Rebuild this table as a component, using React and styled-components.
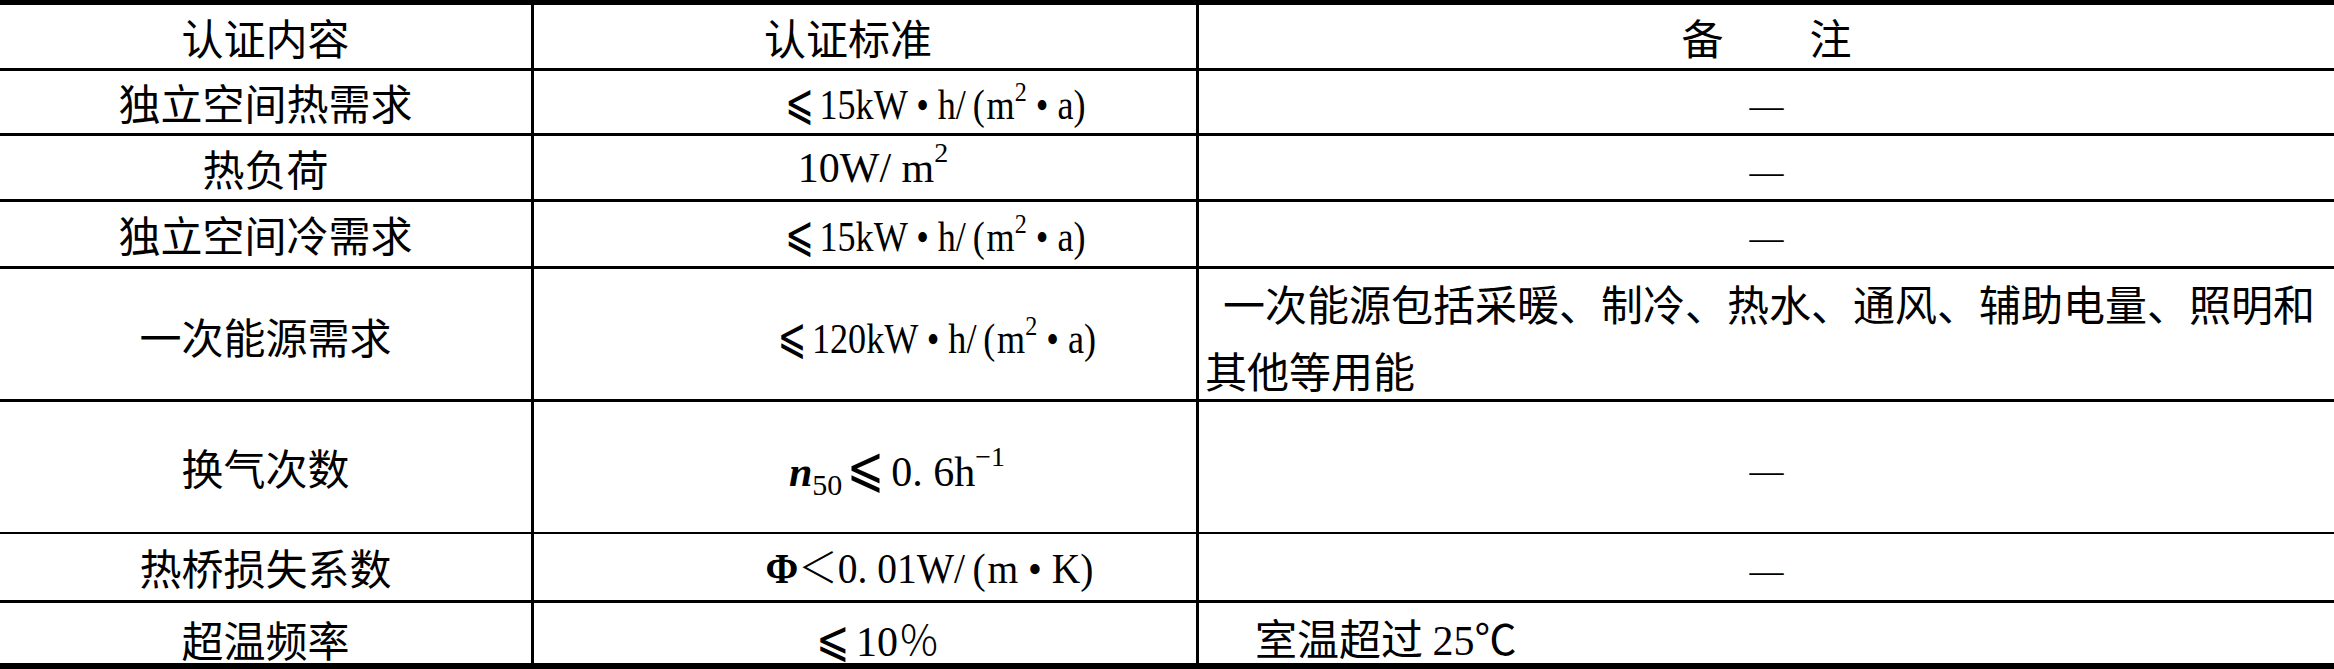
import React from 'react';
import styled, { createGlobalStyle } from 'styled-components';

const GlobalStyle = createGlobalStyle`
  html, body {
    margin: 0;
    padding: 0;
    background: #fff;
  }
  body {
    color: #000;
    font-family: "Noto Sans CJK SC", sans-serif;
  }
`;

const Table = styled.div`
  width: 2334px;
  border-top: 5px solid #000;
  border-bottom: 6px solid #000;
  font-family: "Noto Sans CJK SC", sans-serif;
  font-size: 42px;
`;

const Row = styled.div`
  display: grid;
  grid-template-columns: 531px 665px 1fr;
  height: ${(p) => p.$h}px;
  border-top: ${(p) => p.$line || 0}px solid #000;
`;

const Cell = styled.div`
  display: flex;
  align-items: center;
  justify-content: center;
  min-width: 0;
  line-height: 1;
  white-space: nowrap;

  & + & {
    border-left: 3px solid #000;
  }
`;

const MidCell = styled(Cell)`
  padding-left: ${(p) => Math.max(0, (p.$shift || 0) * 2)}px;
  padding-right: ${(p) => Math.max(0, -(p.$shift || 0) * 2)}px;
`;

const NoteCell = styled(Cell)`
  justify-content: flex-start;
  white-space: normal;
  padding-left: ${(p) => p.$pad || 6}px;
  padding-right: 0;
`;

const NoteText = styled.p`
  margin: 0;
  line-height: 67px;
  text-indent: ${(p) => p.$indent || 0}px;
`;

const Serif = styled.span`
  display: inline-block;
  font-family: "Liberation Serif", "DejaVu Serif", "DejaVu Sans", "Noto Sans CJK SC", serif;
  font-size: 42px;
  white-space: nowrap;
  transform: scaleX(${(p) => p.$squeeze || 1});
`;

const Le = styled.span`
  display: inline-block;
  font-family: "DejaVu Sans", "Noto Sans CJK SC", sans-serif;
  font-size: ${(p) => p.$size || 50}px;
  line-height: 1;
  margin-right: 2px;
  transform: scaleX(0.8);
`;

const Paren = styled.span`
  margin: 0 2px 0 8px;
`;

const Sup = styled.sup`
  font-size: 28px;
  line-height: 0;
  vertical-align: ${(p) => p.$lift || 18}px;
`;

const Sub = styled.sub`
  font-size: 30px;
  line-height: 0;
  vertical-align: -9px;
`;

const Var = styled.span`
  font-weight: bold;
  font-style: ${(p) => (p.$italic ? 'italic' : 'normal')};
`;

const Wide = styled.span`
  font-family: "Noto Sans CJK SC", sans-serif;
  font-weight: 300;
`;

const Dash = styled.span`
  font-family: "Liberation Serif", serif;
  font-size: 34px;
  position: relative;
  top: 4px;
`;

const Gap = styled.span`
  display: inline-block;
  width: 86px;
`;

const perYear = (
  <>
    kW • h/<Paren>(</Paren>m<Sup>2</Sup> • a)
  </>
);

const rows = [
  {
    h: 62,
    name: '独立空间热需求',
    shift: 69,
    std: (
      <Serif $squeeze={0.86}>
        <Le>⩽</Le>15{perYear}
      </Serif>
    ),
    note: <Dash>—</Dash>,
  },
  {
    h: 63,
    name: '热负荷',
    shift: 8,
    std: (
      <Serif>
        10W/ m<Sup $lift={20}>2</Sup>
      </Serif>
    ),
    note: <Dash>—</Dash>,
  },
  {
    h: 64,
    name: '独立空间冷需求',
    shift: 69,
    std: (
      <Serif $squeeze={0.86}>
        <Le>⩽</Le>15{perYear}
      </Serif>
    ),
    note: <Dash>—</Dash>,
  },
  {
    h: 130,
    name: '一次能源需求',
    shift: 70,
    std: (
      <Serif $squeeze={0.86}>
        <Le>⩽</Le>120{perYear}
      </Serif>
    ),
    note: (
      <NoteText $indent={18}>
        一次能源包括采暖、制冷、热水、通风、辅助电量、照明和其他等用能
      </NoteText>
    ),
    left: true,
  },
  {
    h: 130,
    name: '换气次数',
    shift: 32,
    std: (
      <Serif>
        <Var $italic>n</Var>
        <Sub>50</Sub>
        <Le $size={56}>⩽</Le>0. 6h<Sup $lift={20}>−1</Sup>
      </Serif>
    ),
    note: <Dash>—</Dash>,
  },
  {
    h: 66,
    line: 2,
    name: '热桥损失系数',
    shift: 64,
    std: (
      <Serif $squeeze={0.94}>
        <Var>Φ</Var>
        <Wide>＜</Wide>0. 01W/<Paren>(</Paren>m • K)
      </Serif>
    ),
    note: <Dash>—</Dash>,
  },
  {
    h: 60,
    name: '超温频率',
    shift: 11,
    std: (
      <Serif>
        <Le>⩽</Le>10<Wide>％</Wide>
      </Serif>
    ),
    note: (
      <NoteText>
        室温超过 <Serif>25</Serif>℃
      </NoteText>
    ),
    left: true,
    pad: 56,
  },
];

export default function App() {
  return (
    <>
      <GlobalStyle />
      <Table>
        <Row $h={63}>
          <Cell>认证内容</Cell>
          <MidCell $shift={-17}>认证标准</MidCell>
          <Cell>
            备<Gap />注
          </Cell>
        </Row>
        {rows.map((r) => (
          <Row key={r.name} $h={r.h} $line={r.line || 3}>
            <Cell>{r.name}</Cell>
            <MidCell $shift={r.shift}>{r.std}</MidCell>
            {r.left ? (
              <NoteCell $pad={r.pad}>{r.note}</NoteCell>
            ) : (
              <Cell>{r.note}</Cell>
            )}
          </Row>
        ))}
      </Table>
    </>
  );
}
